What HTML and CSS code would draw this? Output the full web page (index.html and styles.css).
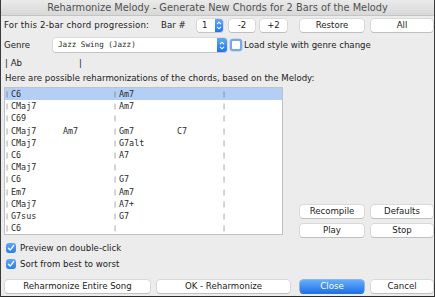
FILE: index.html
```html
<!DOCTYPE html>
<html>
<head>
<meta charset="utf-8">
<link rel="stylesheet" href="styles.css">
</head>
<body>
<div class="win">
  <div class="title">Reharmonize Melody - Generate New Chords for 2 Bars of the Melody</div>
  <div class="content">
    <div class="row r1">
      <span class="lbl prog">For this 2-bar chord progression:</span>
      <span class="lbl bar">Bar #</span>
      <span class="spin"><span class="val">1</span><span class="step"><svg width="6" height="9" viewBox="0 0 6 9"><path d="M1 3.2 L3 1.2 L5 3.2 M1 5.8 L3 7.8 L5 5.8" fill="none" stroke="#fff" stroke-width="1.1"/></svg></span></span>
      <button class="btn bm2">-2</button>
      <button class="btn bp2">+2</button>
      <button class="btn wide restore">Restore</button>
      <button class="btn wide all">All</button>
    </div>
    <div class="row r2">
      <span class="lbl genre">Genre</span>
      <span class="combo"><span class="cval">Jazz Swing (Jazz)</span><span class="step cstep"><svg width="6" height="9" viewBox="0 0 6 9"><path d="M1 3.2 L3 1.2 L5 3.2 M1 5.8 L3 7.8 L5 5.8" fill="none" stroke="#fff" stroke-width="1.1"/></svg></span></span>
      <span class="cb focus"></span>
      <span class="lbl cbl">Load style with genre change</span>
    </div>
    <div class="row r3">
      <span class="lbl ab">| Ab</span>
      <span class="lbl">|</span>
    </div>
    <div class="row r4">
      <span class="lbl">Here are possible reharmonizations of the chords, based on the Melody:</span>
    </div>
    <div class="main">
      <div class="leftcol">
        <div class="list">
          <div class="lrow sel"><span class="pb">|</span><span class="ch1">C6</span><span class="ch2"></span><span class="pb">|</span><span class="ch3">Am7</span><span class="ch4"></span><span class="pb">|</span></div>
          <div class="lrow"><span class="pb">|</span><span class="ch1">CMaj7</span><span class="ch2"></span><span class="pb">|</span><span class="ch3">Am7</span><span class="ch4"></span><span class="pb">|</span></div>
          <div class="lrow"><span class="pb">|</span><span class="ch1">C69</span><span class="ch2"></span><span class="pb">|</span><span class="ch3"></span><span class="ch4"></span><span class="pb">|</span></div>
          <div class="lrow"><span class="pb">|</span><span class="ch1">CMaj7</span><span class="ch2">Am7</span><span class="pb">|</span><span class="ch3">Gm7</span><span class="ch4">C7</span><span class="pb">|</span></div>
          <div class="lrow"><span class="pb">|</span><span class="ch1">CMaj7</span><span class="ch2"></span><span class="pb">|</span><span class="ch3">G7alt</span><span class="ch4"></span><span class="pb">|</span></div>
          <div class="lrow"><span class="pb">|</span><span class="ch1">C6</span><span class="ch2"></span><span class="pb">|</span><span class="ch3">A7</span><span class="ch4"></span><span class="pb">|</span></div>
          <div class="lrow"><span class="pb">|</span><span class="ch1">CMaj7</span><span class="ch2"></span><span class="pb">|</span><span class="ch3"></span><span class="ch4"></span><span class="pb">|</span></div>
          <div class="lrow"><span class="pb">|</span><span class="ch1">C6</span><span class="ch2"></span><span class="pb">|</span><span class="ch3">G7</span><span class="ch4"></span><span class="pb">|</span></div>
          <div class="lrow"><span class="pb">|</span><span class="ch1">Em7</span><span class="ch2"></span><span class="pb">|</span><span class="ch3">Am7</span><span class="ch4"></span><span class="pb">|</span></div>
          <div class="lrow"><span class="pb">|</span><span class="ch1">CMaj7</span><span class="ch2"></span><span class="pb">|</span><span class="ch3">A7+</span><span class="ch4"></span><span class="pb">|</span></div>
          <div class="lrow"><span class="pb">|</span><span class="ch1">G7sus</span><span class="ch2"></span><span class="pb">|</span><span class="ch3">G7</span><span class="ch4"></span><span class="pb">|</span></div>
          <div class="lrow"><span class="pb">|</span><span class="ch1">C6</span><span class="ch2"></span><span class="pb">|</span><span class="ch3"></span><span class="ch4"></span><span class="pb">|</span></div>
        </div>
        <div class="check c-first"><span class="cb on"><svg width="8" height="8" viewBox="0 0 8 8"><path d="M1.4 4.2 L3.2 6.1 L6.6 1.6" fill="none" stroke="#fff" stroke-width="1.4" stroke-linecap="round" stroke-linejoin="round"/></svg></span><span class="lbl">Preview on double-click</span></div>
        <div class="check c-second"><span class="cb on"><svg width="8" height="8" viewBox="0 0 8 8"><path d="M1.4 4.2 L3.2 6.1 L6.6 1.6" fill="none" stroke="#fff" stroke-width="1.4" stroke-linecap="round" stroke-linejoin="round"/></svg></span><span class="lbl">Sort from best to worst</span></div>
      </div>
      <div class="rightcol">
        <div class="bpair">
          <button class="btn wide">Recompile</button>
          <button class="btn wide all">Defaults</button>
        </div>
        <div class="bpair">
          <button class="btn wide">Play</button>
          <button class="btn wide all">Stop</button>
        </div>
      </div>
    </div>
    <div class="row bottom">
      <button class="btn entire">Reharmonize Entire Song</button>
      <button class="btn okb">OK - Reharmonize</button>
      <button class="btn wide close">Close</button>
      <button class="btn wide all">Cancel</button>
    </div>
  </div>
</div>
</body>
</html>
```

FILE: styles.css
```css
html, body {
  margin: 0;
  padding: 0;
  background: #ececec;
}

.win {
  width: 435px;
  height: 297px;
  box-sizing: border-box;
  background: #ececec;
  border-left: 1px solid #3a3a3a;
  border-right: 1px solid #3a3a3a;
  border-bottom: 1px solid #2a2a2a;
  font-family: "DejaVu Sans", "Liberation Sans", sans-serif;
  font-size: 8.6px;
  color: #222;
  overflow: hidden;
}

.title {
  height: 16px;
  line-height: 16px;
  box-sizing: border-box;
  border-bottom: 1px solid #c4c4c4;
  background: linear-gradient(#eaeaea, #d8d8d8);
  text-align: center;
  color: #505050;
  font-size: 9.8px;
}

.content {
  display: flex;
  flex-direction: column;
  padding-left: 3px;
}

.row {
  display: flex;
  align-items: center;
}

.lbl {
  white-space: nowrap;
}

.r1 {
  margin-top: 2px;
  height: 14px;
}

.prog { width: 157px; letter-spacing: 0.15px; }
.bar { width: 36px; }

.spin {
  display: flex;
  width: 26px;
  height: 13px;
  box-sizing: border-box;
  background: #fff;
  border-radius: 3px;
  box-shadow: 0 0 0 0.5px #c8c8c8, 0 1px 0 #c0c0c0;
}

.val {
  flex: 1;
  line-height: 13px;
  padding-left: 5px;
}

.step {
  width: 8px;
  height: 13px;
  background: linear-gradient(#62a9fb, #1f73ec);
  border-radius: 0 3px 3px 0;
  display: flex;
  align-items: center;
  justify-content: center;
}

.btn {
  height: 13px;
  padding: 0;
  box-sizing: border-box;
  border: none;
  background: #fff;
  border-radius: 3px;
  box-shadow: 0 0 0 0.5px #c6c6c6, 0 1px 0 #b8b8b8;
  font-family: "DejaVu Sans", "Liberation Sans", sans-serif;
  font-size: 8.6px;
  color: #222;
  line-height: 13px;
  text-align: center;
}

.bm2 { width: 26px; margin-left: 6px; }
.bp2 { width: 27px; margin-left: 5px; }
.wide { width: 64px; }
.restore { margin-left: 13px; }
.all { margin-left: 7px; width: 62px; }

.r2 {
  margin-top: 6px;
  height: 14px;
}

.genre { width: 49px; }

.combo {
  display: flex;
  width: 174px;
  height: 14px;
  background: #fff;
  border-radius: 3px;
  box-shadow: 0 0 0 0.5px #c8c8c8, 0 1px 0 #c0c0c0;
}

.cval {
  flex: 1;
  padding-left: 5px;
  line-height: 14px;
  font-family: "DejaVu Sans Mono", monospace;
  font-size: 7.6px;
  color: #2a2a2a;
}

.cstep {
  width: 10px;
  height: 14px;
}

.cb {
  width: 10px;
  height: 10px;
  box-sizing: border-box;
  border-radius: 3px;
  display: flex;
  align-items: center;
  justify-content: center;
  flex: none;
}

.cb.focus {
  width: 12px;
  height: 12px;
  margin-left: 3px;
  background: #fff;
  border: 2px solid #7ea6e2;
  box-shadow: 0 0 0 0.5px #a8c0e6;
}

.cbl { margin-left: 2px; }

.cb.on {
  background: linear-gradient(#5ea8fa, #2a7cf0);
}

.r3 {
  margin-top: 5px;
  height: 12px;
}

.ab { width: 74px; padding-left: 1px; }

.r4 {
  margin-top: 3px;
  height: 12px;
  padding-left: 1px;
}

.main {
  display: flex;
  margin-top: 3px;
}

.leftcol {
  width: 279px;
  display: flex;
  flex-direction: column;
}

.list {
  width: 279px;
  height: 148px;
  box-sizing: border-box;
  background: #fff;
  border: 1px solid #c2c2c2;
  font-family: "DejaVu Sans Mono", monospace;
  font-size: 8.4px;
  color: #2a2a2a;
}

.lrow {
  height: 12px;
  line-height: 12px;
  margin-bottom: 0.2px;
  display: flex;
  padding-left: 1px;
}

.lrow.sel {
  background: #b4cff6;
}

.pb {
  width: 5px;
  flex: none;
  font-family: "DejaVu Sans", sans-serif;
  font-size: 6px;
  color: #5a5a5a;
  will-change: transform;
}

.ch1 { width: 52px; flex: none; white-space: nowrap; }
.ch2 { width: 51px; flex: none; white-space: nowrap; }
.ch3 { width: 58px; flex: none; white-space: nowrap; }
.ch4 { width: 46px; flex: none; white-space: nowrap; }

.check {
  display: flex;
  align-items: center;
  height: 12px;
  padding-left: 2px;
}

.check .lbl { margin-left: 4px; }

.c-first { margin-top: 7px; }
.c-second { margin-top: 4px; }

.rightcol {
  display: flex;
  flex-direction: column;
  padding-top: 118px;
  margin-left: 17px;
  gap: 6px;
}

.bpair {
  display: flex;
  height: 13px;
}

.bottom {
  margin-top: 10px;
  height: 13px;
}

.entire { width: 145px; margin-left: 1px; }
.okb { width: 133px; margin-left: 7px; }
.close {
  margin-left: 10px;
  background: linear-gradient(#66adfb, #1e72ea);
  box-shadow: 0 0 0 0.5px #3a7fe0, 0 1px 0 #2a62c0;
  color: #fff;
}
```
